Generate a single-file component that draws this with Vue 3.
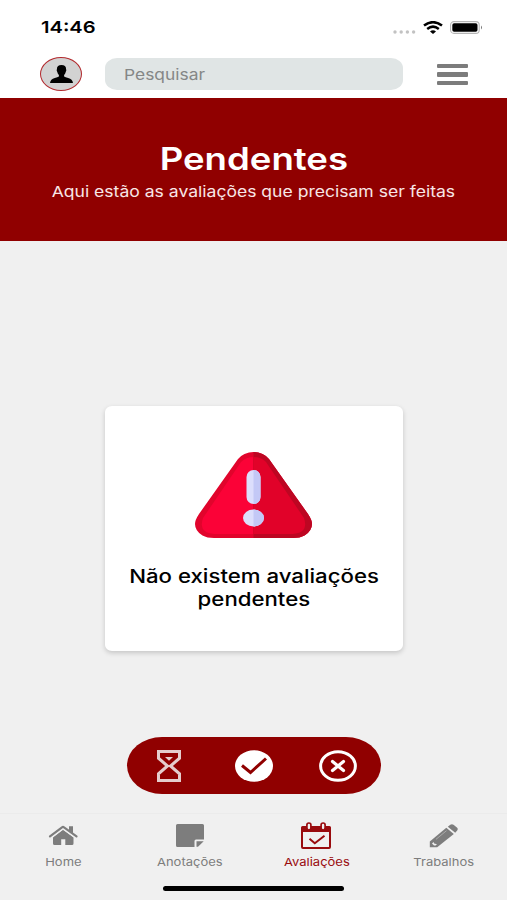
<script setup>
import { ref } from 'vue';

const search = ref('');
const activeTab = ref('avaliacoes');

const tabs = [
  { id: 'home', label: 'Home' },
  { id: 'anotacoes', label: 'Anotações' },
  { id: 'avaliacoes', label: 'Avaliações' },
  { id: 'trabalhos', label: 'Trabalhos' }
];
</script>

<template>
  <div class="screen">
    <div class="status-bar">
      <span class="time wide">14:46</span>
      <div class="status-icons">
        <svg class="signal" viewBox="0 0 23 4">
          <circle cx="2" cy="2" r="1.7" /><circle cx="8.2" cy="2" r="1.7" />
          <circle cx="14.4" cy="2" r="1.7" /><circle cx="20.6" cy="2" r="1.7" />
        </svg>
        <svg class="wifi" viewBox="0 0 20 13" preserveAspectRatio="none">
          <path d="M1 4.600Q10-2.300 19 4.600M4.200 7.900Q10 3.400 15.800 7.900" fill="none" stroke="#000" stroke-width="2.500" />
          <path d="M7 10.500Q10 8 13 10.500L10 13Z" />
        </svg>
        <svg class="battery" viewBox="0 0 33 13">
          <rect x=".6" y=".6" width="28.600" height="11.800" rx="3.400" fill="#fff" stroke="#b5b5b5" stroke-width="1.100" />
          <rect x="2.300" y="2.200" width="25.200" height="8.600" rx="1.800" />
          <path d="M31 4.500Q33 6.500 31 8.500Z" fill="#777" />
        </svg>
      </div>
    </div>

    <header class="top-bar">
      <div class="avatar">
        <svg viewBox="0 0 24 18" preserveAspectRatio="none">
          <path d="M7.200 4.200Q7.200 0 12 0T16.800 4.200Q17.500 5 16.500 6.700Q15.900 9 14.700 10V11.600Q16 12.500 19 13Q23.500 14 24 18H0Q.5 14 5 13Q8 12.500 9.300 11.600V10Q8.100 9 7.500 6.700Q6.500 5 7.200 4.200Z" />
        </svg>
      </div>
      <div class="search">
        <input v-model="search" class="wide" type="text" placeholder="Pesquisar" />
      </div>
      <button class="menu" aria-label="Menu">
        <span></span><span></span><span></span>
      </button>
    </header>

    <section class="banner">
      <h1><span class="wide">Pendentes</span></h1>
      <p><span class="wide">Aqui estão as avaliações que precisam ser feitas</span></p>
    </section>

    <main class="content">
      <div class="card">
        <svg class="warning" viewBox="0 0 117 87">
          <defs>
            <clipPath id="triangle">
              <path d="M43 7Q46 3.500 49.500 2Q58.500-2 67.500 2Q71 3.500 74 7L113 62Q117 68 117 72Q117 79 109.500 83.500Q105 86 98 86H19Q12 86 7.500 83.500Q0 79 0 72Q0 68 4 62Z" />
            </clipPath>
            <clipPath id="right-half"><rect x="58.500" width="59" height="87" /></clipPath>
          </defs>
          <g clip-path="url(#triangle)">
            <rect width="117" height="87" fill="#e1042c" />
            <path d="M46 10Q51 5 58.500 5V82H19Q3 81 8 66Z" fill="#fb0237" />
            <g clip-path="url(#right-half)">
              <rect width="117" height="87" fill="#bd0622" />
              <path d="M58.500 5Q66 5 71 10L109 66Q114 81 98 82H58.500Z" fill="#e10229" />
            </g>
          </g>
          <rect x="51.500" y="18" width="14" height="34" rx="7" fill="#dcdefc" />
          <ellipse cx="58.500" cy="66" rx="10.500" ry="8.500" fill="#dcdefc" />
          <g clip-path="url(#right-half)" fill="#c3c8f6">
            <rect x="51.500" y="18" width="14" height="34" rx="7" />
            <ellipse cx="58.500" cy="66" rx="10.500" ry="8.500" />
          </g>
        </svg>
        <p class="message">
          <span class="wide">Não existem avaliações</span>
          <span class="wide">pendentes</span>
        </p>
      </div>
    </main>

    <div class="filters">
      <button aria-label="Pendentes">
        <svg width="24" height="32" viewBox="0 0 24 32" fill="none" stroke="#e5cccc" stroke-width="3">
          <path d="M1.500 1.500H22.500V8.200L13.500 16L22.500 23.800V30.500H1.500V23.800L10.500 16L1.500 8.200Z" />
          <path d="M8 7H16L12 10.800Z" fill="#e5cccc" stroke="none" />
        </svg>
      </button>
      <button aria-label="Concluídas">
        <svg width="38" height="32" viewBox="0 0 38 32">
          <ellipse cx="19" cy="16" rx="19" ry="15.800" fill="#fff" />
          <path d="M7 15.500L15.500 22.500L31 8.500" fill="none" stroke="#900000" stroke-width="3" />
        </svg>
      </button>
      <button aria-label="Canceladas">
        <svg width="38" height="32" viewBox="0 0 38 32" fill="none" stroke="#fff">
          <ellipse cx="19" cy="16" rx="17.400" ry="14.300" stroke-width="3" />
          <path d="M13.500 11.500L24.500 20.500M24.500 11.500L13.500 20.500" stroke-width="3.200" stroke-linecap="round" />
        </svg>
      </button>
    </div>

    <nav class="tab-bar">
      <button
        v-for="tab in tabs"
        :key="tab.id"
        :class="{ active: activeTab === tab.id }"
        @click="activeTab = tab.id"
      >
        <svg v-if="tab.id === 'home'" width="30" height="29" viewBox="0 0 30 29">
          <path d="M15 8.800L25.500 16.500V22.500Q25.500 24 24 24H17.300V18.300H13.200V24H6.500Q5 24 5 22.500V16.500Z" />
          <path d="M21 5.200H25V13L21 10Z" />
          <path d="M2 15.300L14 6.300Q15 5.600 16 6.300L28.500 15.300" fill="none" stroke="currentColor" stroke-width="2.200" stroke-linecap="round" />
          <path d="M4 16.300L15 8.300L26.500 16.300" fill="none" stroke="#f0f0f0" stroke-width=".8" />
        </svg>
        <svg v-else-if="tab.id === 'anotacoes'" width="30" height="29" viewBox="0 0 30 29">
          <path d="M2.500 3H27.500Q29 3 29 4.500V18.500H21Q19.500 18.500 19.500 20V26H2.500Q1 26 1 24.500V4.500Q1 3 2.500 3Z" />
          <path d="M21.500 20.300H28.700L23 25.800H21.500Z" />
        </svg>
        <svg v-else-if="tab.id === 'avaliacoes'" class="calendar" width="32" height="29" viewBox="0 0 32 29">
          <path d="M2.500 5H29.500Q31 5 31 6.500V26Q31 28 29 28H3Q1 28 1 26V6.500Q1 5 2.500 5ZM3 11V26H29V11Z" fill-rule="evenodd" />
          <rect x="6.900" y="2" width="4" height="7" rx="2" fill="#f0f0f0" stroke="currentColor" stroke-width="1.700" />
          <rect x="21.100" y="2" width="4" height="7" rx="2" fill="#f0f0f0" stroke="currentColor" stroke-width="1.700" />
          <path d="M9.500 17.800L14.800 22.300L24.500 14.800" fill="none" stroke="currentColor" stroke-width="2" />
        </svg>
        <svg v-else width="30" height="29" viewBox="0 0 30 29">
          <path d="M.8 26.300V20.500L17.300 6.800L24.800 13L8.200 26.300Z" />
          <path d="M18.800 5.700L21.300 3.700Q22.900 2.600 24.500 3.700L28.200 6.800Q29.500 8 28.200 9.400L26.200 11.700Z" />
          <path d="M7 18.300L17.500 9.700" fill="none" stroke="#b5b5b5" stroke-width=".8" />
          <path d="M3 22.500L4.500 21L5.200 22.400L8 23.300L6.500 24.600H5Z" fill="#f0f0f0" />
        </svg>
        <span class="wide">{{ tab.label }}</span>
      </button>
    </nav>
    <div class="home-indicator"></div>
  </div>
</template>

<style>
body {
  margin: 0;
}
</style>

<style scoped>
.screen {
  display: flex;
  flex-direction: column;
  width: 507px;
  height: 900px;
  overflow: hidden;
  background: #f0f0f0;
  font-family: Inter, "Liberation Sans", sans-serif;
}

button {
  padding: 0;
  border: none;
  background: none;
  font-family: inherit;
  cursor: pointer;
}

svg {
  display: block;
}

/* Letras alargadas */
.wide {
  display: inline-block;
  white-space: nowrap;
  transform: scaleX(1.18);
}

.status-bar {
  display: flex;
  justify-content: space-between;
  align-items: center;
  flex: none;
  height: 54px;
  box-sizing: border-box;
  padding: 0 24px 0 41px;
  background: #fff;
}

.time {
  font-size: 16.500px;
  font-weight: 600;
  transform: scaleX(1.22);
  transform-origin: left;
}

.status-icons {
  display: flex;
  align-items: center;
}

.signal {
  width: 23px;
  height: 4px;
  margin: 9px 7px 0 0;
  fill: #c2c2c2;
}

.wifi {
  width: 20px;
  height: 13px;
  margin-right: 7px;
}

.battery {
  width: 33px;
  height: 13px;
}

.top-bar {
  display: flex;
  flex: none;
  height: 44px;
  box-sizing: border-box;
  padding: 3px 39px 0 40px;
  background: #fff;
}

.avatar {
  display: flex;
  align-items: center;
  justify-content: center;
  width: 42px;
  height: 34px;
  box-sizing: border-box;
  border: 1.500px solid #b22a2e;
  border-radius: 50%;
  background: #d2d2d2;
}

.avatar svg {
  width: 23px;
  height: 18px;
}

.search {
  display: flex;
  width: 298px;
  height: 32px;
  margin: 1px 0 0 23px;
  border-radius: 12px / 10px;
  background: #e0e5e5;
}

.search input {
  width: 200px;
  margin-left: 19px;
  padding: 1px 0 0;
  border: none;
  outline: none;
  background: none;
  font-family: inherit;
  font-size: 15px;
  transform: scaleX(1.16);
  transform-origin: left;
}

.search input::placeholder {
  color: #858787;
  opacity: 1;
}

.menu {
  display: flex;
  flex-direction: column;
  gap: 4px;
  width: 31px;
  margin: 6.500px 0 0 34px;
}

.menu span {
  width: 31px;
  height: 4.600px;
  border-radius: 1px;
  background: #7c7c7c;
}

.banner {
  flex: none;
  height: 143px;
  box-sizing: border-box;
  padding-top: 42px;
  background: #900000;
  color: #fff;
  text-align: center;
}

.banner h1 {
  margin: 0;
  font-size: 31px;
  font-weight: 600;
  line-height: 38px;
}

.banner p {
  margin: 4px 0 0;
  color: #f8e6e6;
  font-size: 15px;
  line-height: 20px;
}

.banner p .wide {
  transform: scaleX(1.17);
}

.content {
  flex: none;
  height: 496px;
  box-sizing: border-box;
  padding: 165px 104px 0 105px;
}

.card {
  display: flex;
  flex-direction: column;
  align-items: center;
  height: 245px;
  border-radius: 7px / 6px;
  background: #fff;
  box-shadow: 0 2px 5px rgba(0, 0, 0, 0.18);
}

.warning {
  width: 117px;
  height: 87px;
  margin: 46px 1px 0 0;
}

.message {
  display: flex;
  flex-direction: column;
  align-items: center;
  margin: 26px 0 0;
  font-size: 18.500px;
  font-weight: 500;
  line-height: 22.500px;
}

.message .wide {
  transform: scaleX(1.2);
}

.filters {
  display: flex;
  align-items: center;
  flex: none;
  align-self: center;
  width: 254px;
  height: 57px;
  border-radius: 35px / 28.500px;
  background: #900000;
}

.filters button {
  display: flex;
  flex: 1;
  justify-content: center;
}

.tab-bar {
  display: flex;
  flex: none;
  height: 73px;
  margin-top: 19px;
  box-sizing: border-box;
  border-top: 1px solid #ebebeb;
}

.tab-bar button {
  display: flex;
  flex: 1;
  flex-direction: column;
  align-items: center;
  padding-top: 7px;
  color: #7d7d7d;
  font-size: 11px;
  line-height: 14px;
}

.tab-bar button .wide {
  margin-top: 5px;
}

.tab-bar svg {
  fill: currentColor;
}

.tab-bar .calendar {
  margin-right: 2px;
}

.tab-bar .active {
  color: #990b0e;
}

.home-indicator {
  flex: none;
  align-self: center;
  width: 181px;
  height: 5px;
  border-radius: 3px;
  background: #000;
}
</style>
